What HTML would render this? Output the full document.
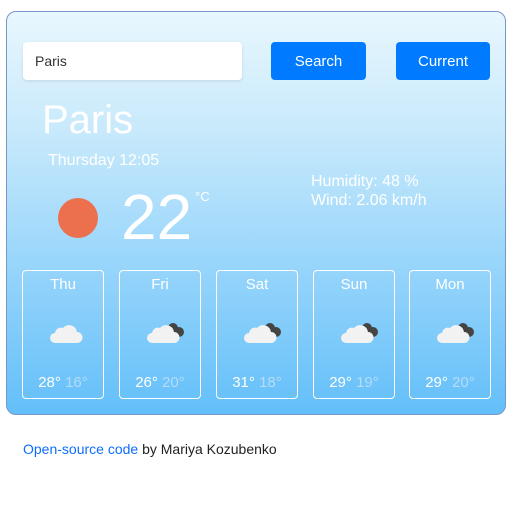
<!DOCTYPE html>
<html><head><style>
body{margin:0;width:512px;height:518px;background:#fff;font-family:"Liberation Sans",sans-serif;position:relative;overflow:hidden}
.card{position:absolute;left:6px;top:11px;width:498px;height:402px;border:1px solid #7896c6;border-radius:10px;background:linear-gradient(#e9f7fe,#c7e9fb 30%,#9cd7fb 60%,#63bff9)}
.abs{position:absolute}
.input{left:16px;top:30px;width:219px;height:38px;background:#fff;border-radius:4px;box-shadow:0 1px 3px rgba(0,0,0,.1)}
.input span{position:absolute;left:12px;top:11px;font-size:14px;color:#333}
.btn{top:30px;height:38px;background:#007bff;border-radius:4px;color:#fff;font-size:15px;text-align:center;line-height:40px}
.w{color:#fff}
.box{top:258px;width:80px;height:127px;border:1px solid #fff;border-radius:4px;color:#fff;text-align:center}
.box .d{position:absolute;top:5px;width:100%;font-size:15px}
.box .t{position:absolute;top:103px;width:100%;font-size:15px}
.box .t span{color:#b5dcf8}
.box svg{position:absolute;left:26px;top:50px}
</style></head><body>
<div class="card">
<div class="abs input"><span>Paris</span></div>
<div class="abs btn" style="left:264px;width:95px">Search</div>
<div class="abs btn" style="left:389px;width:94px">Current</div>
<div class="abs w" style="left:35px;top:86px;font:40px 'Liberation Sans',sans-serif">Paris</div>
<div class="abs w" style="left:41px;top:140px;font:16px 'Liberation Sans',sans-serif">Thursday 12:05</div>
<div class="abs" style="left:51px;top:186px;width:40px;height:40px;border-radius:50%;background:#ec6f4e"></div>
<div class="abs w" style="left:114px;top:168px;font:64px 'Liberation Sans',sans-serif;line-height:74px">22</div>
<div class="abs w" style="left:188px;top:177px;font:13px 'Liberation Sans',sans-serif">°C</div>
<div class="abs w" style="left:304px;top:160px;font-size:16px;line-height:19px">Humidity: 48 %<br>Wind: 2.06 km/h</div>

<div class="abs box" style="left:15px"><div class="d">Thu</div>
<svg width="36" height="22" viewBox="0 0 36 22"><path d="M6 22a5 5 0 0 1 0-10a6 6 0 0 1 8-5a8 8 0 0 1 14 4a5.5 5.5 0 0 1 0 11z" fill="#f2f2f2"/></svg>
<div class="t">28° <span>16°</span></div></div>
<div class="abs box" style="left:112px"><div class="d">Fri</div>
<svg width="40" height="22" viewBox="0 0 40 22"><circle cx="27" cy="7" r="5" fill="#444"/><circle cx="33" cy="11" r="5" fill="#444"/><circle cx="23" cy="10" r="4" fill="#444"/><path d="M6 22a5 5 0 0 1 0-10a6 6 0 0 1 8-5a8 8 0 0 1 14 4a5.5 5.5 0 0 1 0 11z" fill="#f2f2f2"/></svg>
<div class="t">26° <span>20°</span></div></div>
<div class="abs box" style="left:209px"><div class="d">Sat</div>
<svg width="40" height="22" viewBox="0 0 40 22"><circle cx="27" cy="7" r="5" fill="#444"/><circle cx="33" cy="11" r="5" fill="#444"/><circle cx="23" cy="10" r="4" fill="#444"/><path d="M6 22a5 5 0 0 1 0-10a6 6 0 0 1 8-5a8 8 0 0 1 14 4a5.5 5.5 0 0 1 0 11z" fill="#f2f2f2"/></svg>
<div class="t">31° <span>18°</span></div></div>
<div class="abs box" style="left:306px"><div class="d">Sun</div>
<svg width="40" height="22" viewBox="0 0 40 22"><circle cx="27" cy="7" r="5" fill="#444"/><circle cx="33" cy="11" r="5" fill="#444"/><circle cx="23" cy="10" r="4" fill="#444"/><path d="M6 22a5 5 0 0 1 0-10a6 6 0 0 1 8-5a8 8 0 0 1 14 4a5.5 5.5 0 0 1 0 11z" fill="#f2f2f2"/></svg>
<div class="t">29° <span>19°</span></div></div>
<div class="abs box" style="left:402px"><div class="d">Mon</div>
<svg width="40" height="22" viewBox="0 0 40 22"><circle cx="27" cy="7" r="5" fill="#444"/><circle cx="33" cy="11" r="5" fill="#444"/><circle cx="23" cy="10" r="4" fill="#444"/><path d="M6 22a5 5 0 0 1 0-10a6 6 0 0 1 8-5a8 8 0 0 1 14 4a5.5 5.5 0 0 1 0 11z" fill="#f2f2f2"/></svg>
<div class="t">29° <span>20°</span></div></div>
</div>
<div class="abs" style="left:23px;top:441px;font-size:14px;color:#222"><span style="color:#0d6efd">Open-source code</span> by Mariya Kozubenko</div>
</body></html>
